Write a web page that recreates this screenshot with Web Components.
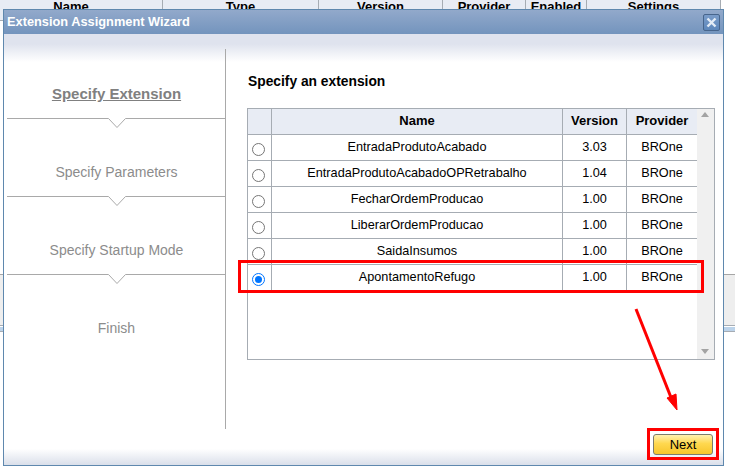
<!DOCTYPE html>
<html><head><meta charset="utf-8">
<style>
html,body{margin:0;padding:0;background:#fff;overflow:hidden}
body{width:735px;height:473px;position:relative;font-family:"Liberation Sans",Arial,sans-serif}
</style></head><body>
<bg-header></bg-header>
<bg-band></bg-band>
<wizard-dialog heading="Extension Assignment Wizard">
  <wizard-step slot="steps" active>Specify Extension</wizard-step>
  <wizard-step slot="steps">Specify Parameters</wizard-step>
  <wizard-step slot="steps">Specify Startup Mode</wizard-step>
  <wizard-step slot="steps" last>Finish</wizard-step>
  <extension-table slot="table"></extension-table>
  <next-button slot="footer">Next</next-button>
</wizard-dialog>
<annotation-marks></annotation-marks>
<script>
function def(name, html){
  customElements.define(name, class extends HTMLElement{
    constructor(){super();this.attachShadow({mode:'open'}).innerHTML=typeof html==='function'?html(this):html;}
  });
}
def('bg-header',`<style>
:host{display:flex;height:20px;width:721px;background:#e8ecf4;border-bottom:1px solid #a6acb3;font:bold 13px "Liberation Sans",Arial,sans-serif;color:#000;overflow:hidden}
div{box-sizing:border-box;border-right:1px solid #a6acb3;text-align:center;line-height:14px;height:20px}
</style>
<div style="width:163px;padding-right:20px">Name</div><div style="width:156px">Type</div><div style="width:124px">Version</div><div style="width:83px">Provider</div><div style="width:61px">Enabled</div><div style="width:134px">Settings</div>`);
def('bg-band',`<style>
:host{display:block;position:absolute;left:0;right:0;top:274px;height:58px;background:linear-gradient(#a6a6a6,#a6a6a6 1px,#eeeeee 1px,#eeeeee 51px,#a6acb3 51px,#a6acb3 52px,#fff 52px,#fff 53px,#bcd3ea 53px,#bcd3ea 57px,#a6acb3 57px)}
</style>`);
def('wizard-step',h=>`<style>
:host{display:flex;flex-direction:column;height:78px;box-sizing:border-box;padding-top:20px;margin-left:3px;width:219px;color:#8c8c8c;font:14px "Liberation Sans",Arial,sans-serif}
.t{flex:none;height:48px;display:flex;align-items:center;justify-content:center;text-align:center;line-height:16px}
:host([active]){color:#808080;font-weight:bold;font-size:15px}
:host([active]) .t{text-decoration:underline}
svg{display:block;flex:none}
</style><div class="t"><slot></slot></div>${h.hasAttribute('last')?'':'<svg width="219" height="10" viewBox="0 0 219 10"><path d="M0 .5H101.500L110 9.500L118.500 .5H219" fill="none" stroke="#a9a9a9"/></svg>'}`);
def('wizard-dialog',h=>`<style>
:host{display:flex;flex-direction:column;position:absolute;left:3px;top:9px;width:721px;height:457px;box-sizing:border-box;border:1px solid #5f88ae;background:#fff;font-family:"Liberation Sans",Arial,sans-serif}
.bar{flex:none;height:24px;box-sizing:border-box;background:linear-gradient(#92a9cb,#7394bd);display:flex;align-items:center;justify-content:space-between;padding:0 3px 2px 3px;color:#fff;font:bold 12.800px "Liberation Sans",Arial,sans-serif}
.close{width:17px;height:17px;box-sizing:border-box;border:1px solid #47658c;border-radius:2px;background:linear-gradient(#7a9cc9,#5d87bb);display:flex;align-items:center;justify-content:center;margin-top:2px}
.grad{flex:none;height:28px;background:linear-gradient(#dfe3ee 0,#dfe3ee 10px,#fff 100%);}
.body{flex:none;height:380px;display:flex;margin-top:-13px}
.side{flex:none;box-sizing:border-box;border-right:1px solid #a9a9a9;width:222px;padding-top:1px}
.main{flex:1;padding:24px 0 0 21px;min-width:0}
h2{margin:0 0 17px;padding-left:1px;font:bold 13.800px/18px "Liberation Sans",Arial,sans-serif;color:#000}
.foot{flex:1;background:linear-gradient(#fff 0,#fff 55%,#dadfea 100%);display:flex;justify-content:flex-end;align-items:flex-start;padding:5px 10px 0 0}
</style>
<div class="bar"><span>${h.getAttribute('heading')}</span><div class="close"><svg width="11" height="11" viewBox="0 0 11 11"><path d="M1.500 1.500L9.500 9.500M9.500 1.500L1.500 9.500" stroke="#e4ecf6" stroke-width="2.400"/></svg></div></div>
<div class="grad"></div>
<div class="body"><div class="side"><slot name="steps"></slot></div>
<div class="main"><h2>Specify an extension</h2><slot name="table"></slot></div></div>
<div class="foot"><slot name="footer"></slot></div>`);
const rows=[['EntradaProdutoAcabado','3.03'],['EntradaProdutoAcabadoOPRetrabalho','1.04'],['FecharOrdemProducao','1.00'],['LiberarOrdemProducao','1.00'],['SaidaInsumos','1.00'],['ApontamentoRefugo','1.00']];
def('extension-table',`<style>
:host{display:flex;width:468px;height:252px;box-sizing:border-box;border:1px solid #a6acb3;background:#fff;font:12.700px "Liberation Sans",Arial,sans-serif;color:#000}
.grid{width:449px;flex:none}
.r{display:grid;grid-template-columns:24px 291px 64px 70px;height:26px;box-sizing:border-box;border-bottom:1px solid #a6acb3}
.r>div{border-right:1px solid #a6acb3;text-align:center;line-height:24px;height:25px;box-sizing:border-box}
.r>div:last-child{border-right:0}
.h{background:#e8ecf4;font-weight:bold;font-size:13px}
.h>div{line-height:23px}
.radio{position:relative}
.radio i{position:absolute;left:4px;top:8px;width:13px;height:13px;box-sizing:border-box;border:1px solid #767676;border-radius:50%;background:#fff}
.radio.on i{border-color:#0075ff;}
.radio.on i:after{content:"";position:absolute;left:2px;top:2px;width:7px;height:7px;border-radius:50%;background:#0075ff}
.sb{flex:1;background:#f0f0f0;position:relative}
.sb:before,.sb:after{content:"";position:absolute;left:4px;border:4px solid transparent}
.sb:before{top:3px;border-bottom:5px solid #a3a3a3;border-top:0}
.sb:after{bottom:5px;border-top:5px solid #a3a3a3;border-bottom:0}
</style><div class="grid"><div class="r h"><div></div><div>Name</div><div>Version</div><div>Provider</div></div>`+
rows.map((r,i)=>`<div class="r"><div class="radio${i==5?' on':''}"><i></i></div><div>${r[0]}</div><div>${r[1]}</div><div>BROne</div></div>`).join('')+`</div><div class="sb"></div>`);
def('next-button',`<style>
:host{display:block;width:60px;height:21px;box-sizing:border-box;border:1px solid #7c7c6c;border-radius:3px;background:linear-gradient(#fff1b0,#ffd84f 45%,#f7c52c);text-align:center;font:13px/19px "Liberation Sans",Arial,sans-serif;color:#000}
</style><slot></slot>`);
def('annotation-marks',`<style>
:host{display:block;position:absolute;inset:0;pointer-events:none}
.b{position:absolute;box-sizing:border-box;border:3px solid #f00}
svg{position:absolute;left:0;top:0}
</style>
<div class="b" style="left:238px;top:260px;width:466px;height:33px"></div>
<div class="b" style="left:647px;top:428px;width:72px;height:32px"></div>
<svg width="735" height="473"><path d="M636 309L672 400" stroke="#f00" stroke-width="3" fill="none"/><path d="M667 398L676 394L677 410Z" fill="#f00" stroke="#f00"/></svg>`);
</script>
</body></html>
